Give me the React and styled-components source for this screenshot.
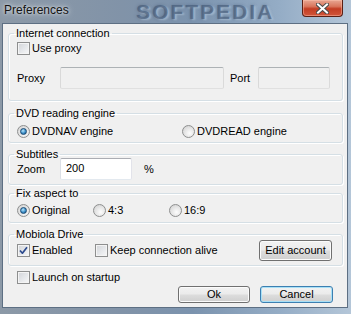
import React from 'react'
import styled, { createGlobalStyle } from 'styled-components'

const GlobalStyle = createGlobalStyle`
    html, body {
        margin: 0;
        padding: 0;
        background: #fff;
    }
    body {
        font-family: 'Liberation Sans', Arial, sans-serif;
        font-size: 11px;
        color: #000;
    }
`

const Window = styled.div`
    width: 351px;
    height: 314px;
    box-sizing: border-box;
    display: flex;
    flex-direction: column;
    padding: 0 3px 6px 2px;
    overflow: hidden;
    background: linear-gradient(90deg, #8c99a7 0%, #8193a8 35%, #7b93ae 55%, #95adc6 80%, #b4c6d8 100%);
`

const TitleBar = styled.div`
    position: relative;
    height: 23px;
    margin: 0 -3px 0 -2px;
    padding-left: 4px;
    display: flex;
    align-items: flex-start;
    flex-shrink: 0;
`

const Title = styled.span`
    position: relative;
    z-index: 1;
    font-size: 12px;
    line-height: 20px;
    color: #141414;
    text-shadow: 0 0 6px rgba(255, 255, 255, .8), 0 0 3px rgba(255, 255, 255, .6);
`

const Watermark = styled.span`
    position: absolute;
    left: 136px;
    top: 0;
    height: 23px;
    font-family: 'Liberation Sans', Arial, sans-serif;
    font-weight: bold;
    font-size: 21px;
    line-height: 23px;
    letter-spacing: 2px;
    color: rgba(62, 84, 114, .6);
    text-shadow: 2px 1px 2px rgba(190, 210, 230, .6), 0 0 3px rgba(62, 84, 114, .5);
    pointer-events: none;
`

const CloseButton = styled.div`
    position: relative;
    z-index: 1;
    margin-left: auto;
    margin-right: 8px;
    width: 41px;
    height: 17px;
    box-sizing: border-box;
    border: 1px solid #5a1f14;
    border-top: none;
    border-radius: 0 0 4px 4px;
    background: linear-gradient(180deg, #e8a692 0%, #d9765d 40%, #c33d23 55%, #d0553a 100%);
    box-shadow: inset 0 0 0 1px rgba(255, 200, 180, .45);
    display: flex;
    align-items: center;
    justify-content: center;
`

const Client = styled.div`
    flex: 1;
    background: #f0f0f0;
    border: 1px solid #5d6f83;
    display: flex;
    flex-direction: column;
    padding: 3px 0 0 0;
`

const Group = styled.fieldset`
    margin: ${p => p.$mt || 0}px 4px 0 5px;
    padding: ${p => p.$pt || 0}px 10px ${p => p.$pb || 0}px 8px;
    border: 1px solid #d5dfe5;
    border-radius: 3px;
    box-shadow: inset 1px 1px 0 #fff, 1px 1px 0 #fff;
    min-width: 0;
`

const Legend = styled.legend`
    padding: 0 2px;
    margin-left: -3px;
    line-height: 13px;
    font-size: 11px;
`

const Row = styled.div`
    display: flex;
    align-items: center;
    height: ${p => p.$h || 13}px;
    margin-top: ${p => p.$mt || 0}px;
    padding-left: ${p => p.$pl || 0}px;
    padding-right: ${p => p.$pr || 0}px;
    justify-content: ${p => p.$end ? 'flex-end' : 'flex-start'};
    gap: ${p => p.$gap || 0}px;
`

const Option = styled.label`
    display: flex;
    align-items: center;
    gap: 2px;
    flex-shrink: 0;
    width: ${p => p.$w ? `${p.$w}px` : 'auto'};
    line-height: 13px;
`

const Box = styled.span`
    width: 13px;
    height: 13px;
    box-sizing: border-box;
    border: 1px solid #8e8f8f;
    background: linear-gradient(135deg, #d2d4d8 0%, #e6e8eb 55%, #f8f8f8 100%);
    box-shadow: inset 0 0 0 1px #f4f4f4;
    display: flex;
    align-items: center;
    justify-content: center;
`

const Round = styled.span`
    width: 13px;
    height: 13px;
    box-sizing: border-box;
    border-radius: 50%;
    border: 1px solid #8e8f8f;
    background: radial-gradient(circle at 60% 65%, #fdfdfd 0%, #e3e3e3 55%, #cbcbcb 100%);
    display: flex;
    align-items: center;
    justify-content: center;
`

const Dot = styled.span`
    width: 7px;
    height: 7px;
    box-sizing: border-box;
    border-radius: 50%;
    border: 1px solid #1c4a73;
    background: radial-gradient(circle at 40% 35%, #b9e6fb 0%, #3b8fc9 55%, #14507f 100%);
`

const Label = styled.span`
    width: ${p => p.$w}px;
    flex-shrink: 0;
    margin-left: ${p => p.$ml || 0}px;
`

const TextBox = styled.input`
    width: ${p => p.$w}px;
    height: 22px;
    box-sizing: border-box;
    margin: 0;
    padding: 0 5px 2px 5px;
    font-family: 'Liberation Sans', Arial, sans-serif;
    font-size: 11px;
    color: #000;
    border: 1px solid;
    border-color: ${p => p.disabled ? '#adb2b5 #dadada #e0e0e0 #d9d9d9' : '#abadb3 #e2e3ea #e3e9ef #dbdfe6'};
    border-radius: 2px;
    background: ${p => p.disabled ? '#f0f0f0' : '#fff'};
    outline: none;
    flex-shrink: 0;
`

const Button = styled.button`
    width: ${p => p.$w}px;
    height: ${p => p.$h}px;
    margin-left: ${p => p.$auto ? 'auto' : '0'};
    padding: 0;
    box-sizing: border-box;
    flex-shrink: 0;
    font-family: 'Liberation Sans', Arial, sans-serif;
    font-size: 11px;
    line-height: 1;
    color: #000;
    border: 1px solid ${p => p.$default ? '#3c7fb1' : '#707070'};
    border-radius: 3px;
    background: linear-gradient(180deg, #f2f2f2 0%, #ebebeb 48%, #dddddd 52%, #cfcfcf 100%);
    box-shadow: inset 0 0 0 1px ${p => p.$default ? '#a8e0f6' : '#fbfbfb'};
`

const Check = () => (
    <svg width="9" height="9" viewBox="0 0 9 9">
        <path d="M1 4.5 L3.4 7.2 L8 1.2" fill="none" stroke="#2c4a8e" strokeWidth="1.7" strokeLinejoin="round" />
    </svg>
)

const CheckBox = ({ checked, children, w }) => (
    <Option $w={w}>
        <Box>{checked && <Check />}</Box>
        {children}
    </Option>
)

const Radio = ({ checked, children, w }) => (
    <Option $w={w}>
        <Round>{checked && <Dot />}</Round>
        {children}
    </Option>
)

const App = () => {
    return (
        <>
            <GlobalStyle />
            <Window>
                <TitleBar>
                    <Title>Preferences</Title>
                    <Watermark>SOFTPEDIA</Watermark>
                    <CloseButton>
                        <svg width="13" height="11" viewBox="0 0 13 11">
                            <path d="M2 1.5 L11 9.5 M11 1.5 L2 9.5" stroke="#4a4a4a" strokeWidth="4" strokeLinecap="square" />
                            <path d="M2 1.5 L11 9.5 M11 1.5 L2 9.5" stroke="#fff" strokeWidth="2" strokeLinecap="square" />
                        </svg>
                    </CloseButton>
                </TitleBar>
                <Client>
                    <Group $pt={2} $pb={11}>
                        <Legend>Internet connection</Legend>
                        <Row>
                            <CheckBox>Use proxy</CheckBox>
                        </Row>
                        <Row $h={22} $mt={12}>
                            <Label $w={43}>Proxy</Label>
                            <TextBox $w={164} disabled />
                            <Label $w={28} $ml={6}>Port</Label>
                            <TextBox $w={72} disabled />
                        </Row>
                    </Group>

                    <Group $mt={6} $pt={5} $pb={4}>
                        <Legend>DVD reading engine</Legend>
                        <Row>
                            <Radio checked w={165}>DVDNAV engine</Radio>
                            <Radio>DVDREAD engine</Radio>
                        </Row>
                    </Group>

                    <Group $mt={5} $pb={4}>
                        <Legend>Subtitles</Legend>
                        <Row $h={22} $mt={-3}>
                            <Label $w={43}>Zoom</Label>
                            <TextBox $w={72} defaultValue="200" />
                            <Label $w={20} $ml={12}>%</Label>
                        </Row>
                    </Group>

                    <Group $mt={2} $pt={4} $pb={5}>
                        <Legend>Fix aspect to</Legend>
                        <Row>
                            <Radio checked w={76}>Original</Radio>
                            <Radio w={76}>4:3</Radio>
                            <Radio>16:9</Radio>
                        </Row>
                    </Group>

                    <Group $mt={5} $pb={4}>
                        <Legend>Mobiola Drive</Legend>
                        <Row $h={22} $mt={-2}>
                            <CheckBox checked w={78}>Enabled</CheckBox>
                            <CheckBox>Keep connection alive</CheckBox>
                            <Button $w={73} $h={21} $auto>Edit account</Button>
                        </Row>
                    </Group>

                    <Row $mt={5} $pl={14}>
                        <CheckBox>Launch on startup</CheckBox>
                    </Row>

                    <Row $h={17} $mt={2} $end $pr={14} $gap={10}>
                        <Button $w={72} $h={17}>Ok</Button>
                        <Button $w={73} $h={17} $default>Cancel</Button>
                    </Row>
                </Client>
            </Window>
        </>
    )
}

export default App
